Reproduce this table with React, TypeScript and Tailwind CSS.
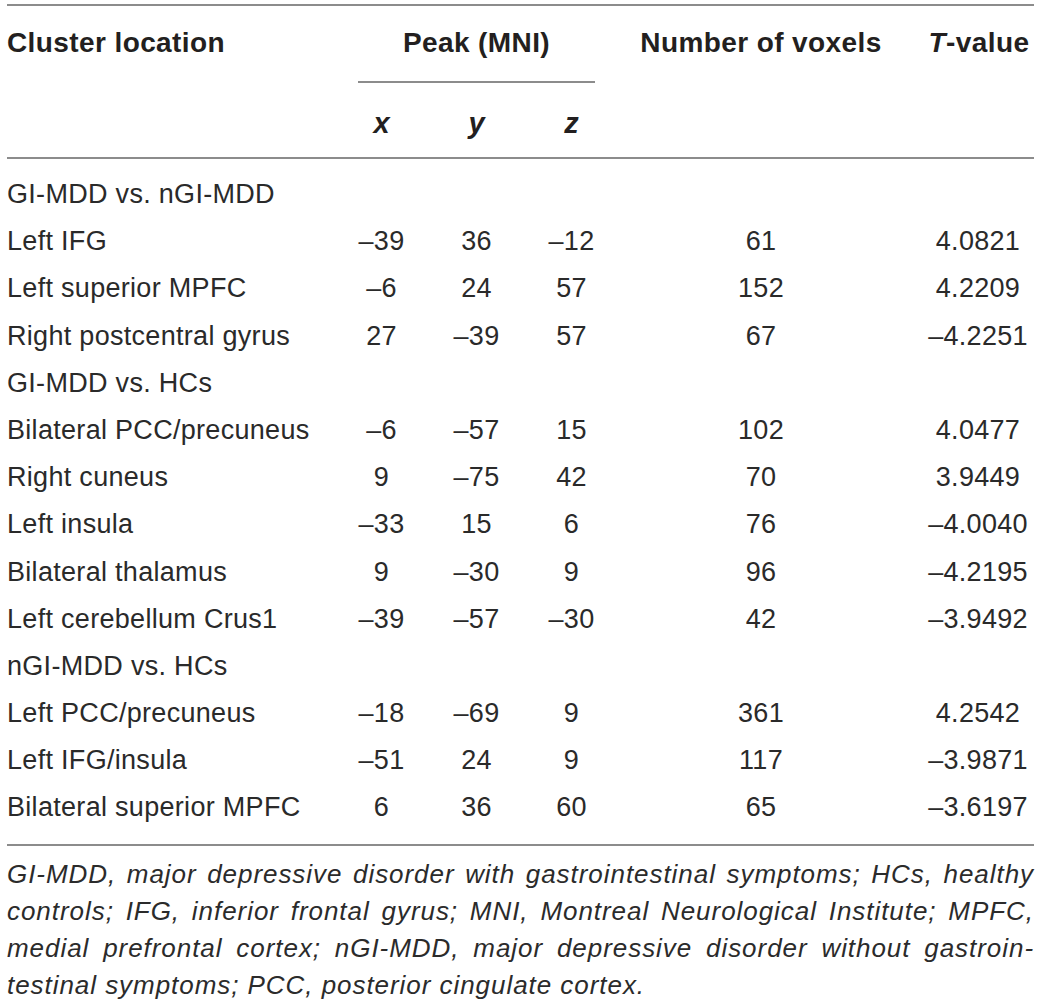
import React from "react";

type Row =
  | { kind: "section"; label: string }
  | { kind: "data"; label: string; x: string; y: string; z: string; n: string; t: string };

const rows: Row[] = [
  { kind: "section", label: "GI-MDD vs. nGI-MDD" },
  { kind: "data", label: "Left IFG", x: "–39", y: "36", z: "–12", n: "61", t: "4.0821" },
  { kind: "data", label: "Left superior MPFC", x: "–6", y: "24", z: "57", n: "152", t: "4.2209" },
  { kind: "data", label: "Right postcentral gyrus", x: "27", y: "–39", z: "57", n: "67", t: "–4.2251" },
  { kind: "section", label: "GI-MDD vs. HCs" },
  { kind: "data", label: "Bilateral PCC/precuneus", x: "–6", y: "–57", z: "15", n: "102", t: "4.0477" },
  { kind: "data", label: "Right cuneus", x: "9", y: "–75", z: "42", n: "70", t: "3.9449" },
  { kind: "data", label: "Left insula", x: "–33", y: "15", z: "6", n: "76", t: "–4.0040" },
  { kind: "data", label: "Bilateral thalamus", x: "9", y: "–30", z: "9", n: "96", t: "–4.2195" },
  { kind: "data", label: "Left cerebellum Crus1", x: "–39", y: "–57", z: "–30", n: "42", t: "–3.9492" },
  { kind: "section", label: "nGI-MDD vs. HCs" },
  { kind: "data", label: "Left PCC/precuneus", x: "–18", y: "–69", z: "9", n: "361", t: "4.2542" },
  { kind: "data", label: "Left IFG/insula", x: "–51", y: "24", z: "9", n: "117", t: "–3.9871" },
  { kind: "data", label: "Bilateral superior MPFC", x: "6", y: "36", z: "60", n: "65", t: "–3.6197" },
];

const grid = "grid grid-cols-[327px_95px_95px_95px_284px_130px]";

export default function App() {
  return (
    <div className="w-[1041px] h-[1005px] bg-white px-[7px] font-['Liberation_Sans',Arial,sans-serif] text-[#231f20]">
      {/* top rule */}
      <div className="mt-[4px] h-[2px] bg-[#8c8c8c]" />

      {/* header row 1 */}
      <div className={`${grid} h-[75px] text-[28px] leading-[32px] font-bold tracking-[0.4px]`}>
        <div className="pt-[21px]">Cluster location</div>
        <div className="col-span-3 pt-[21px] text-center">Peak (MNI)</div>
        <div className="pt-[21px] text-center">Number of voxels</div>
        <div className="pt-[21px] pl-[22px] text-center">
          <span className="italic">T</span>-value
        </div>
      </div>

      {/* peak sub-rule */}
      <div className={grid}>
        <div />
        <div className="col-span-3 px-[24px]">
          <div className="h-[2px] bg-[#8c8c8c]" />
        </div>
      </div>

      {/* header row 2 */}
      <div className={`${grid} h-[74px] text-[29px] leading-[32px] font-bold italic`}>
        <div />
        <div className="pt-[24px] text-center">x</div>
        <div className="pt-[24px] text-center">y</div>
        <div className="pt-[24px] text-center">z</div>
        <div />
        <div />
      </div>

      {/* header bottom rule */}
      <div className="h-[2px] bg-[#8c8c8c]" />

      {/* body */}
      <div className="pt-[12px] pb-[12px] text-[27px] tracking-[0.3px] text-[#2a2a2a]">
        {rows.map((r, i) =>
          r.kind === "section" ? (
            <div key={i} className="h-[47.2px] leading-[47.2px] whitespace-nowrap">
              {r.label}
            </div>
          ) : (
            <div key={i} className={`${grid} h-[47.2px] leading-[47.2px] whitespace-nowrap`}>
              <div>{r.label}</div>
              <div className="text-center">{r.x}</div>
              <div className="text-center">{r.y}</div>
              <div className="text-center">{r.z}</div>
              <div className="text-center">{r.n}</div>
              <div className="pl-[20px] text-center">{r.t}</div>
            </div>
          )
        )}
      </div>

      {/* footer rule */}
      <div className="h-[2px] bg-[#8c8c8c]" />

      {/* footnote */}
      <div className="pt-[10px] text-[26px] leading-[37px] italic tracking-[0.95px] text-[#2b2b2b]">
        <div className="text-justify [text-align-last:justify]">
          GI-MDD, major depressive disorder with gastrointestinal symptoms; HCs, healthy
        </div>
        <div className="text-justify [text-align-last:justify]">
          controls; IFG, inferior frontal gyrus; MNI, Montreal Neurological Institute; MPFC,
        </div>
        <div className="text-justify [text-align-last:justify]">
          medial prefrontal cortex; nGI-MDD, major depressive disorder without gastroin-
        </div>
        <div>testinal symptoms; PCC, posterior cingulate cortex.</div>
      </div>
    </div>
  );
}
